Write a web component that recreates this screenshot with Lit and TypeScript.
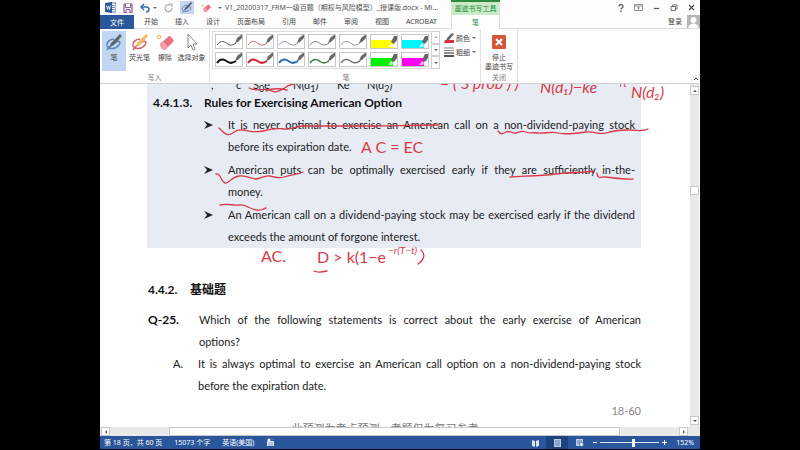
import { LitElement, html, svg, css } from "lit";
import { customElement, property } from "lit/decorators.js";
import { classMap } from "lit/directives/class-map.js";

const TABS = ["开始", "插入", "设计", "页面布局", "引用", "邮件", "审阅", "视图", "ACROBAT"];

interface Pen {
  name: string;
  color: string;
  width: number;
  marker?: boolean;
}

const PENS: Pen[] = [
  { name: "黑色细笔", color: "#555555", width: 1 },
  { name: "红色细笔", color: "#d8606a", width: 1 },
  { name: "蓝色细笔", color: "#8a97ad", width: 1 },
  { name: "绿色细笔", color: "#76857c", width: 1 },
  { name: "灰色细笔", color: "#999999", width: 1 },
  { name: "黄色荧光笔", color: "#ffff00", width: 8, marker: true },
  { name: "青色荧光笔", color: "#00f6ff", width: 8, marker: true },
  { name: "黑色粗笔", color: "#111111", width: 2 },
  { name: "红色粗笔", color: "#d02030", width: 2 },
  { name: "蓝色粗笔", color: "#2f6bb5", width: 2 },
  { name: "绿色粗笔", color: "#3f7d55", width: 1.5 },
  { name: "灰色粗笔", color: "#666666", width: 1.3 },
  { name: "绿色荧光笔", color: "#00f000", width: 8, marker: true },
  { name: "洋红荧光笔", color: "#ff00f0", width: 8, marker: true },
];

const penShape = (swirl: string, body: string) => svg`
  <path d="M9 5C4 5 1 9 2 12c2 4 9 3 12-1 2-3 0-5-3-3-3 1-6 4-9 8" fill="none" stroke=${swirl} stroke-width="1.5"/>
  <path d="M15 0l2 2-8 9-4 2 1-4z" fill=${body}/>`;

const eraserShape = svg`
  <path d="M4 10l9-8q2 0 5 5l-9 9q-4 0-5-6z" fill="#ea7183"/>
  <path d="M4 10l3-3 5 6-3 3q-4 0-5-6z" fill="#f4a0ab"/>`;

@customElement("pen-swatch")
export class PenSwatch extends LitElement {
  @property({ attribute: false }) pen!: Pen;
  static styles = css`
    :host { display: block; }
    button {
      display: block; width: 28px; height: 15px; padding: 0; box-sizing: border-box;
      border: 1px solid #c6c6c6; background: #fff;
    }
    svg { display: block; width: 26px; height: 13px; }
  `;
  render() {
    const p = this.pen;
    return html`<button aria-label=${p.name}><svg viewBox="0 0 26 13">
      ${p.marker
        ? svg`<path d="M0 5h22v8H0z" fill=${p.color}/>
            <path d="M20 7l3-6 3 0v4l-3 4z" fill="#666"/><path d="M17 12l3-4 2 2-1 2z" fill="#fff" opacity=".7"/>`
        : svg`<path d="M1 10C5 4 9 7 12 9s5 1 8-1" fill="none" stroke=${p.color} stroke-width=${p.width}/>
            <path d="M19 8l2-5 4-3 1 0v3l-4 4z" fill="#6a6a6a"/>`}
    </svg></button>`;
  }
}

@customElement("word-ribbon")
export class WordRibbon extends LitElement {
  static styles = css`
    :host { display: block; flex: none; color: #444; font-size: 7px; line-height: 9px; }
    button { font: inherit; color: inherit; background: none; border: 0; padding: 0; margin: 0; white-space: nowrap; }
    svg { display: block; flex: none; }
    .head { display: grid; grid-template-columns: 351px 49px 1fr; background: #fdfdfd; }
    .titlebar { height: 15px; display: flex; align-items: center; }
    .quick { display: flex; align-items: center; width: 125px; box-sizing: border-box; padding-left: 5px; gap: 7px; }
    .quick .on { background: #c2d5f2; height: 13px; width: 14px; display: grid; place-items: center; }
    .undo { display: flex; align-items: center; gap: 3px; }
    .title { white-space: nowrap; color: #555; }
    .context { background: #c9ebc9; border-top: 2px solid #2f8a3c; box-sizing: border-box; color: #2b8a35;
      height: 15px; display: grid; place-items: center; white-space: nowrap; }
    .sys { justify-content: flex-end; gap: 10px; padding-right: 5px; }
    .tabs { height: 14px; display: flex; align-items: center; border-bottom: 1px solid #dcdcdc; box-sizing: border-box; gap: 17px; }
    .file { background: #2a579a; color: #fff; width: 34px; height: 14px; margin-right: -7px; align-self: flex-start; }
    .pentab { background: #fff; border: 1px solid #dcdcdc; border-width: 0 1px; height: 14px; color: #2b8a35; }
    .login { justify-content: flex-end; gap: 5px; }
    .body { height: 55px; background: #fefefe; border-bottom: 1px solid #d2d2d2; box-sizing: border-box; display: flex; position: relative; }
    .group { display: flex; flex-direction: column; justify-content: space-between; border-right: 1px solid #e2e2e2; box-sizing: border-box; height: 54px; padding-top: 2px; }
    .label { text-align: center; color: #777; line-height: 10px; }
    .write { width: 110px; }
    .close { width: 37px; }
    .close .big { width: 36px; }
    .row { display: flex; }
    .big { display: flex; flex-direction: column; align-items: center; gap: 2px; height: 40px; box-sizing: border-box; padding-top: 3px; }
    .write .row { padding-left: 2px; }
    .b24 { width: 24px; }
    .b27 { width: 27px; }
    .b29 { width: 29px; }
    .sel { background: #c2d5f2; }
    .pens { width: 271px; padding-left: 2px; }
    .gallery { display: grid; grid-template-columns: repeat(7, 28px); gap: 3px; padding: 2px; border: 1px solid #dedede; border-right: 0; box-sizing: border-box; height: 38px; }
    .spin { display: grid; width: 9px; height: 38px; }
    .spin button { border: 1px solid #d0d0d0; display: grid; place-items: center; }
    .opts { display: flex; flex-direction: column; gap: 4px; padding: 2px 0 0 4px; }
    .opts button { display: flex; align-items: center; gap: 2px; height: 10px; }
    .fold { position: absolute; right: 1px; bottom: 2px; }
  `;
  caret() {
    return html`<svg width="4" height="4" viewBox="0 0 4 4"><path d="M0 1h4L2 3z" fill="#666"/></svg>`;
  }
  render() {
    return html`
      <div class="head">
        <div class="titlebar">
          <div class="quick">
            <svg width="11" height="11" viewBox="0 0 11 11"><path d="M5 1h6v9H5z" fill="#fff" stroke="#2a579a" stroke-width=".8"/><path d="M7 3.500h3M7 5.500h3M7 7.500h3" stroke="#2a579a" stroke-width=".7"/><path d="M0 1l7-1v11l-7-1z" fill="#2a579a"/><path d="M1.500 3.500l1 4 1-3.500 1 3.500 1-4" fill="none" stroke="#fff" stroke-width=".8"/></svg>
            <button aria-label="保存"><svg width="10" height="10" viewBox="0 0 10 10"><path d="M1 1h8v8.500H1z" fill="#f7f0fa" stroke="#8a5a9c" stroke-width="1.200"/><path d="M2.500 1v3.500h5V1M3 9.500V6.500h4v3" fill="#fff" stroke="#8a5a9c"/></svg></button>
            <button class="undo" aria-label="撤消"><svg width="10" height="10" viewBox="0 0 10 10"><path d="M1 4h5c4 0 4 5 0 5M4 1L1 4l3 3" fill="none" stroke="#3b6cb0" stroke-width="1.500"/></svg>${this.caret()}</button>
            <button aria-label="重复"><svg width="9" height="10" viewBox="0 0 9 10"><path d="M6 2a3.500 3.500 0 1 0 2 3M5 1h3v3" fill="none" stroke="#aaa" stroke-width="1.200"/></svg></button>
            <button class="on" aria-label="笔"><svg width="12" height="11" viewBox="0 0 18 17">${penShape("#5a87b5", "#5c6670")}</svg></button>
            <button aria-label="橡皮擦"><svg width="10" height="10" viewBox="0 0 18 17">${eraserShape}<circle cx="3" cy="4" r="2" fill="#f3c66a"/></svg></button>
            <button aria-label="自定义">${this.caret()}</button>
          </div>
          <span class="title">V1_20200317_FRM一级百题（期权与风险模型）_授课版.docx - Mi...</span>
        </div>
        <div class="context">墨迹书写工具</div>
        <div class="titlebar sys">
          <button aria-label="帮助"><svg width="6" height="8" viewBox="0 0 6 8"><path d="M1 2.500C1 0 5 0 5 2.500 5 4 3 4 3 5.500M3 6.500V8" fill="none" stroke="#555" stroke-width="1.300"/></svg></button>
          <button aria-label="功能区显示选项"><svg width="9" height="7" viewBox="0 0 9 7"><path d="M.5.5h8v6h-8zM.5 2h8M4.500 6V3M3 4.500L4.500 3 6 4.500" fill="none" stroke="#777" stroke-width=".8"/></svg></button>
          <button aria-label="最小化"><svg width="7" height="7" viewBox="0 0 7 7"><path d="M1 4.500h5" stroke="#555" stroke-width="1.200"/></svg></button>
          <button aria-label="还原"><svg width="8" height="7" viewBox="0 0 8 7"><path d="M1 2.500h4.500v4H1zM2.500 2.500V1H7v4H5.500" fill="none" stroke="#666" stroke-width=".9"/></svg></button>
          <button aria-label="关闭"><svg width="7" height="7" viewBox="0 0 7 7"><path d="M1 1l5 5M6 1L1 6" stroke="#444" stroke-width="1.100"/></svg></button>
        </div>
        <div class="tabs"><button class="file">文件</button>${TABS.map((t) => html`<button>${t}</button>`)}</div>
        <button class="pentab">笔</button>
        <div class="tabs login"><button>登录</button>
          <svg width="13" height="13" viewBox="0 0 13 13"><path d="M0 0h13v13H0z" fill="#b5b5b5"/><circle cx="6.500" cy="5" r="3" fill="#fff"/><path d="M1.500 13c0-6 10-6 10 0z" fill="#fff"/></svg></div>
      </div>
      <div class="body">
        <div class="group write">
          <div class="row">
            <button class="big b24 sel"><svg width="18" height="17" viewBox="0 0 18 17">${penShape("#5a87b5", "#5c6670")}</svg>笔</button>
            <button class="big b27"><svg width="18" height="17" viewBox="0 0 18 17">${penShape("#d9656c", "#f0bd62")}</svg>荧光笔</button>
            <button class="big b24"><svg width="18" height="17" viewBox="0 0 18 17">${eraserShape}<circle cx="3" cy="3" r="1.800" fill="#fff" stroke="#eeb94e"/></svg>擦除</button>
            <button class="big b29"><svg width="18" height="17" viewBox="0 0 18 17"><path d="M5 0v14l3-3 2 5 2-1-2-5h4z" fill="#fff" stroke="#777" stroke-width=".9"/></svg>选择对象</button>
          </div>
          <div class="label">写入</div>
        </div>
        <div class="group pens">
          <div class="row">
            <div class="gallery">${PENS.map((p) => html`<pen-swatch .pen=${p}></pen-swatch>`)}</div>
            <div class="spin"><button aria-label="上一行"><svg width="4" height="4" viewBox="0 0 4 4"><path d="M0 3h4L2 1z" fill="#bbb"/></svg></button><button aria-label="下一行">${this.caret()}</button><button aria-label="更多">${this.caret()}</button></div>
            <div class="opts">
              <button><svg width="10" height="10" viewBox="0 0 10 10"><path d="M1 7h9v3H0z" fill="#dc2f3c"/><path d="M8 0l2 1-5 6-3 1 1-3z" fill="#666"/></svg>颜色${this.caret()}</button>
              <button><svg width="10" height="10" viewBox="0 0 10 10"><path d="M0 1h10M0 3.500h10" stroke="#666" stroke-width=".8"/><path d="M0 6h10" stroke="#555" stroke-width="1.300"/><path d="M0 9h10" stroke="#555" stroke-width="2"/></svg>粗细${this.caret()}</button>
            </div>
          </div>
          <div class="label">笔</div>
        </div>
        <div class="group close">
          <button class="big"><svg width="18" height="17" viewBox="0 0 18 17"><rect x="2" y="1" width="14" height="14" rx="1" fill="#d4573a"/><path d="M6 5l6 6M12 5l-6 6" stroke="#fff" stroke-width="2"/></svg><span>停止<br>墨迹书写</span></button>
          <div class="label">关闭</div>
        </div>
        <button class="fold" aria-label="折叠功能区"><svg width="6" height="4" viewBox="0 0 6 4"><path d="M1 3l2-2 2 2" fill="none" stroke="#555"/></svg></button>
      </div>`;
  }
}

@customElement("word-page")
export class WordPage extends LitElement {
  static styles = css`
    :host { display: block; flex: 1; min-width: 0; position: relative; overflow: hidden; background: #fefefe;
      color: #222; font-family: Lato, "Noto Sans CJK SC", sans-serif; font-size: 11px; line-height: 22px; }
    .page { padding: 0 49px 0 47px; }
    .shade { background: #e6ebf4; padding: 0 6px; }
    h2, p { margin: 0; line-height: 22px; }
    p { font-size: 11px; }
    h2 { display: flex; color: #111; font-size: 12px; }
    .formula { display: flex; padding-left: 58px; height: 8px; line-height: 14px; align-items: flex-end; white-space: nowrap; }
    .formula sub { line-height: 0; }
    .t1 { width: 25px; }
    .t2 { width: 17px; }
    .t3 { width: 40px; }
    .t4 { width: 44px; }
    .t5 { width: 30px; }
    .num { width: 51px; flex: none; }
    .item { display: flex; padding: 0 0 1px 51px; }
    .item:last-child { padding-bottom: 0; }
    .mark { width: 24px; flex: none; display: flex; align-items: center; height: 22px; }
    .copy { flex: 1; min-width: 0; white-space: nowrap; }
    .full { display: block; white-space: normal; text-align: justify; text-align-last: justify; }
    .text { display: block; }
    .sub { padding: 31px 0 8px 1px; }
    .sub .num { width: 42px; }
    .q { display: flex; padding-left: 1px; }
    .q .num { font-weight: 700; font-size: 12px; color: #111; }
    .a { display: flex; padding-left: 26px; }
    .a .num { width: 25px; }
    .pageno { text-align: right; color: #888; line-height: 16px; padding-top: 6px; }
    .foot { text-align: center; color: #777; line-height: 16px; padding: 2px 18px 0 0; white-space: nowrap; }
    .ink { position: absolute; left: 0; top: 0; width: 590px; height: 343px; pointer-events: none; }
    .ink path { fill: none; stroke: #d93a48; stroke-width: 1.3; stroke-linecap: round; stroke-linejoin: round; }
    .ink text { fill: #d93a48; font-family: Lato, sans-serif; font-style: italic; font-size: 16px; }
    .ink .up { font-size: 10px; }
    .ink .upright { font-style: normal; }
  `;
  arrow() {
    return html`<span class="mark"><svg width="9" height="8" viewBox="0 0 9 8"><path d="M0 0l9 4-9 4 3-4z" fill="#222"/></svg></span>`;
  }
  render() {
    return html`
      <div class="page">
        <div class="shade">
          <p class="formula"><span class="t1">,</span><span class="t2">c</span><span class="t3">S<sub>0</sub>e</span><span class="t4">N(d<sub>1</sub>)</span><span class="t5">Ke</span><span>N(d<sub>2</sub>)</span></p>
          <h2><span class="num">4.4.1.3.</span>Rules for Exercising American Option</h2>
          <div class="item">${this.arrow()}<p class="copy"><span class="full">It is never optimal to exercise an American call on a non-dividend-paying stock</span><span class="text">before its expiration date.</span></p></div>
          <div class="item">${this.arrow()}<p class="copy"><span class="full">American puts can be optimally exercised early if they are sufficiently in-the-</span><span class="text">money.</span></p></div>
          <div class="item">${this.arrow()}<p class="copy"><span class="full">An American call on a dividend-paying stock may be exercised early if the dividend</span><span class="text">exceeds the amount of forgone interest.</span></p></div>
        </div>
        <h2 class="sub"><span class="num">4.4.2.</span>基础题</h2>
        <div class="q"><span class="num">Q-25.</span><p class="copy"><span class="full">Which of the following statements is correct about the early exercise of American</span><span class="text">options?</span></p></div>
        <div class="a"><span class="num">A.</span><p class="copy"><span class="full">It is always optimal to exercise an American call option on a non-dividend-paying stock</span><span class="text">before the expiration date.</span></p></div>
        <div class="pageno">18-60</div>
        <div class="foot">此预测为考点预测，考题仅为复习参考</div>
      </div>
      <svg class="ink" viewBox="100 84 590 343">
        <path d="M249 88c8 4 14 0 20 2s6 3 12 0 6-5 13-6M266 91c6-3 12-3 21-1"/>
        <text x="440" y="89">= ( S prob ) )</text>
        <text x="540" y="93">N(d₁)−ke</text>
        <text x="631" y="98">N(d₂)</text>
        <text class="up" x="614" y="87">−rt</text>
        <path d="M219 128c5 5 8 8 12 6s5-5 12-4 12 3 20 1 14-3 22-2 9-3 18-3 14 0 22 0 30 0 44 0 50-1 70-1"/>
        <path d="M498 131c3 4 4 3 8 1s6 2 10 1 5-3 10-1 6 0 12 1 14-2 20 0 20 0 28-1 14 3 20 1 12-3 22-3 14 2 20-1"/>
        <text class="upright" x="361" y="153">A C = EC</text>
        <path d="M216 174c5-1 5 8 9 9s6-6 14-7 12 3 17 3 8-4 14-3 8 3 14 1 12-2 19-5"/>
        <path d="M510 177c15-1 30-1 46-3s26-1 38-3M597 173c0 6 4 4 8 4s20 3 28 2"/>
        <path d="M220 205c9-2 12 1 19 0s10 4 17 5 6-1 10-2"/>
        <text class="upright" x="261" y="262">AC.</text>
        <text class="upright" x="317" y="263">D &gt; k(1−e</text>
        <text class="up" x="388" y="254">−r(T−t)</text>
        <path d="M314 271c4 2 9 1 13 0"/>
        <path d="M421 250c5 4 3 10-3 14"/>
      </svg>`;
  }
}

@customElement("app-root")
export class AppRoot extends LitElement {
  static styles = css`
    :host { display: flex; flex-direction: column; height: 100vh; box-sizing: border-box; padding: 0 12.5% 1px; background: #000;
      font-family: "Noto Sans", "Noto Sans CJK SC", sans-serif; overflow: hidden; }
    button { padding: 0; margin: 0; border: 0; background: none; font: inherit; color: inherit; white-space: nowrap; }
    svg { display: block; }
    .main { display: flex; flex: 1; min-height: 0; background: #fefefe; }
    .vbar { width: 9px; display: flex; flex-direction: column; background: #e9e9e9; padding: 2px 0; margin-right: 1px; }
    .vbar .space { flex: 9; }
    .vbar .rest { flex: 22; }
    .knob { width: 9px; height: 9px; background: #fff; border: 1px solid #c8c8c8; box-sizing: border-box; display: grid; place-items: center; flex: none; }
    .hbar { display: flex; height: 9px; background: #e9e9e9; flex: none; padding: 0 12px 0 1px; }
    .hbar .thumb { background: #fff; border: 1px solid #c8c8c8; box-sizing: border-box; flex: 451; }
    .hbar .left { flex: 59; }
    .hbar .right { flex: 59; }
    .status { height: 13px; flex: none; background: #2a569b; color: #fff; font-size: 7px; line-height: 13px; display: flex; align-items: center; gap: 12px; padding: 0 6px 0 4px; white-space: nowrap; }
    .views { display: flex; }
    .views button { width: 22px; height: 13px; display: grid; place-items: center; }
    .views .on { background: #1c437d; }
    .zoom { display: flex; align-items: center; gap: 3px; margin-left: auto; }
    input { appearance: none; width: 59px; height: 9px; margin: 0; background: linear-gradient(#dce5f3, #dce5f3) center / 100% 1px no-repeat; }
    input::-webkit-slider-thumb { appearance: none; width: 3px; height: 8px; background: #fff; }
    .pct { margin-left: 6px; }
  `;
  knob(d: string, label: string) {
    return html`<button class="knob" aria-label=${label}><svg width="4" height="4" viewBox="0 0 4 4"><path d=${d} fill="#555"/></svg></button>`;
  }
  view(label: string, on: boolean, body: unknown) {
    return html`<button class=${classMap({ on })} aria-label=${label}><svg width="9" height="8" viewBox="0 0 9 8">${body}</svg></button>`;
  }
  render() {
    return html`
      <word-ribbon></word-ribbon>
      <div class="main">
        <word-page></word-page>
        <div class="vbar">${this.knob("M0 3h4L2 1z", "向上滚动")}<div class="space"></div><div class="knob"></div><div class="rest"></div>${this.knob("M0 1h4L2 3z", "向下滚动")}</div>
      </div>
      <div class="hbar">${this.knob("M3 0v4L1 2z", "向左滚动")}<div class="left"></div><div class="thumb"></div><div class="right"></div>${this.knob("M1 0v4l2-2z", "向右滚动")}</div>
      <div class="status">
        <span>第 18 页，共 60 页</span><span>15073 个字</span><span>英语(美国)</span>
        <svg width="9" height="9" viewBox="0 0 9 9"><path d="M1 3h7v5H1z" fill="#dce5f3"/><circle cx="3" cy="2" r="1.500" fill="#fff"/><path d="M5 1h3M2 5h5M2 7h5" stroke="#6f8fc0" stroke-width=".8"/></svg>
        <div class="zoom">
          <div class="views">
            ${this.view("阅读视图", false, svg`<path d="M1 1l3 1 .5 0L8 1v6L4.500 8 1 7z" fill="#dce5f3"/><path d="M4.500 2v6" stroke="#2a569b"/>`)}
            ${this.view("页面视图", true, svg`<path d="M1 0h7v8H1z" fill="#b9cbe6"/><path d="M2 2h5M2 4h5M2 6h5" stroke="#4a6fa8" stroke-width=".8"/>`)}
            ${this.view("Web 版式视图", false, svg`<path d="M1 0h7v7H1z" fill="#b9cbe6"/><path d="M2 2h5M2 4h3" stroke="#4a6fa8" stroke-width=".8"/><circle cx="6.500" cy="5.500" r="2" fill="#fff" stroke="#2a569b" stroke-width=".7"/>`)}
          </div>
          <button aria-label="缩小"><svg width="4" height="5" viewBox="0 0 4 5"><path d="M0 2.500h4" stroke="#fff"/></svg></button>
          <input type="range" min="10" max="290" value="170" aria-label="显示比例">
          <button aria-label="放大"><svg width="5" height="5" viewBox="0 0 5 5"><path d="M0 2.500h5M2.500 0v5" stroke="#fff"/></svg></button>
          <span class="pct">152%</span>
        </div>
      </div>`;
  }
}
